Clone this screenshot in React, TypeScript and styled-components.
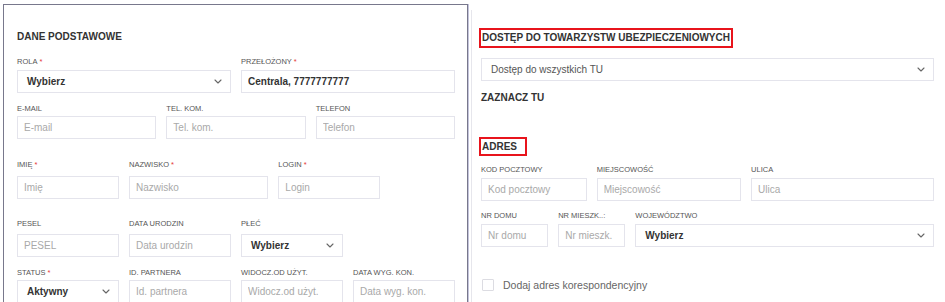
import React from "react";
import styled, { createGlobalStyle } from "styled-components";

const Global = createGlobalStyle`
  html, body { margin: 0; padding: 0; background: #fff; }
  body { font-family: "Liberation Sans", Arial, sans-serif; }
  * { box-sizing: border-box; }
`;

const Page = styled.div`
  display: flex;
  align-items: flex-start;
  padding: 4px 0 0 3px;
  height: 302px;
  overflow: hidden;
`;

const LeftPanel = styled.section`
  width: 465px;
  min-height: 330px;
  flex: none;
  border: 1px solid #78788c;
  border-bottom: none;
  box-shadow: 1px 0 0 #c4c4dc;
  padding: 26px 12px 0 13px;
`;

const RightCol = styled.section`
  flex: none;
  width: 474px;
  min-height: 330px;
  margin: 6px 0 0 3px;
  border-left: 1px solid #e6e6ec;
  padding: 17px 11px 0 9px;
`;

const Heading = styled.h2<{ $boxed?: boolean; $pr?: number; $lh?: number; $mt?: number }>`
  margin: ${(p) => p.$mt ?? 0}px 0 0 ${(p) => (p.$boxed ? -2 : 0)}px;
  font-size: 10px;
  font-weight: 700;
  line-height: ${(p) => p.$lh ?? 12}px;
  color: #333;
  display: ${(p) => (p.$boxed ? "inline-block" : "block")};
  border: ${(p) => (p.$boxed ? "2px solid #e8141c" : "none")};
  padding: ${(p) => (p.$boxed ? `0 ${p.$pr ?? 1}px 0 1px` : "0")};
`;

const Block = styled.div<{ $mt: number }>`
  margin-top: ${(p) => p.$mt}px;
`;

const Row = styled.div<{ $mt: number }>`
  display: grid;
  grid-template-columns: repeat(12, 1fr);
  column-gap: 10px;
  margin-top: ${(p) => p.$mt}px;
`;

const FieldWrap = styled.div<{ $span: number }>`
  grid-column: span ${(p) => p.$span};
  display: flex;
  flex-direction: column;
  min-width: 0;
`;

const Label = styled.label<{ $gap: number }>`
  font-size: 7.5px;
  line-height: 10px;
  color: #555;
  text-transform: uppercase;
  white-space: nowrap;
  margin-bottom: ${(p) => p.$gap}px;
`;

const Req = styled.span`
  color: #e53935;
  margin-left: 2px;
`;

const TextInput = styled.input<{ $bold?: boolean }>`
  width: 100%;
  height: 23px;
  border: 1px solid #e4e4ec;
  border-radius: 0;
  padding: 0 6px;
  margin: 0;
  font-family: "Liberation Sans", Arial, sans-serif;
  font-size: 10px;
  font-weight: ${(p) => (p.$bold ? 700 : 400)};
  color: #333;
  background: #fff;
  outline: none;
  &::placeholder {
    color: #a9a9a9;
  }
`;

const SelectBox = styled.div<{ $bold?: boolean }>`
  height: 23px;
  border: 1px solid #e4e4ec;
  background: #fff;
  display: flex;
  align-items: center;
  justify-content: space-between;
  padding: 0 8px 0 9px;
  font-size: 10px;
  font-weight: ${(p) => (p.$bold ? 700 : 400)};
  color: ${(p) => (p.$bold ? "#333" : "#555")};
  white-space: nowrap;
`;

const CheckRow = styled.div`
  display: flex;
  align-items: center;
  gap: 9px;
  margin: 32px 0 0 1px;
`;

const CheckBox = styled.span`
  width: 12px;
  height: 12px;
  border: 1px solid #dcdce2;
  border-radius: 1px;
  background: #fff;
  flex: none;
`;

const CheckLabel = styled.span`
  font-size: 10.5px;
  color: #666;
  line-height: 12px;
`;

const Chevron = () => (
  <svg width="8" height="5" viewBox="0 0 8 5" fill="none">
    <polyline points="1,1 4,4 7,1" stroke="#666" strokeWidth="1.1" strokeLinecap="round" strokeLinejoin="round" />
  </svg>
);

type FieldProps = {
  label: string;
  span: number;
  gap: number;
  req?: boolean;
  placeholder?: string;
  value?: string;
  select?: string;
  selectBold?: boolean;
};

const Field = ({ label, span, gap, req, placeholder, value, select, selectBold = true }: FieldProps) => (
  <FieldWrap $span={span}>
    <Label $gap={gap}>
      {label}
      {req && <Req>*</Req>}
    </Label>
    {select !== undefined ? (
      <SelectBox $bold={selectBold}>
        <span>{select}</span>
        <Chevron />
      </SelectBox>
    ) : value !== undefined ? (
      <TextInput $bold defaultValue={value} readOnly />
    ) : (
      <TextInput placeholder={placeholder} />
    )}
  </FieldWrap>
);

export default function App() {
  return (
    <>
      <Global />
      <Page>
        <LeftPanel>
          <Heading>DANE PODSTAWOWE</Heading>
          <Row $mt={14}>
            <Field label="Rola" req span={6} gap={3} select="Wybierz" />
            <Field label="Przełożony" req span={6} gap={3} value="Centrala, 7777777777" />
          </Row>
          <Row $mt={11}>
            <Field label="E-mail" span={4} gap={2} placeholder="E-mail" />
            <Field label="Tel. kom." span={4} gap={2} placeholder="Tel. kom." />
            <Field label="Telefon" span={4} gap={2} placeholder="Telefon" />
          </Row>
          <Row $mt={21}>
            <Field label="Imię" req span={3} gap={6} placeholder="Imię" />
            <Field label="Nazwisko" req span={4} gap={6} placeholder="Nazwisko" />
            <Field label="Login" req span={3} gap={6} placeholder="Login" />
          </Row>
          <Row $mt={20}>
            <Field label="Pesel" span={3} gap={5} placeholder="PESEL" />
            <Field label="Data urodzin" span={3} gap={5} placeholder="Data urodzin" />
            <Field label="Płeć" span={3} gap={5} select="Wybierz" />
          </Row>
          <Row $mt={11}>
            <Field label="Status" req span={3} gap={2} select="Aktywny" />
            <Field label="Id. partnera" span={3} gap={2} placeholder="Id. partnera" />
            <Field label="Widocz.od użyt." span={3} gap={2} placeholder="Widocz.od użyt." />
            <Field label="Data wyg. kon." span={3} gap={2} placeholder="Data wyg. kon." />
          </Row>
        </LeftPanel>

        <RightCol>
          <Heading $boxed $lh={16}>DOSTĘP DO TOWARZYSTW UBEZPIECZENIOWYCH</Heading>
          <Block $mt={10}>
            <SelectBox>
              <span>Dostęp do wszystkich TU</span>
              <Chevron />
            </SelectBox>
          </Block>
          <Heading $mt={11}>ZAZNACZ TU</Heading>
          <Block $mt={32}>
            <Heading $boxed $lh={15} $pr={8}>ADRES</Heading>
          </Block>
          <Row $mt={9}>
            <Field label="Kod pocztowy" span={3} gap={3} placeholder="Kod pocztowy" />
            <Field label="Miejscowość" span={4} gap={3} placeholder="Miejscowość" />
            <Field label="Ulica" span={5} gap={3} placeholder="Ulica" />
          </Row>
          <Row $mt={10}>
            <Field label="Nr domu" span={2} gap={3} placeholder="Nr domu" />
            <Field label="Nr mieszk..:" span={2} gap={3} placeholder="Nr mieszk." />
            <Field label="Województwo" span={8} gap={3} select="Wybierz" />
          </Row>
          <CheckRow>
            <CheckBox />
            <CheckLabel>Dodaj adres korespondencyjny</CheckLabel>
          </CheckRow>
        </RightCol>
      </Page>
    </>
  );
}
